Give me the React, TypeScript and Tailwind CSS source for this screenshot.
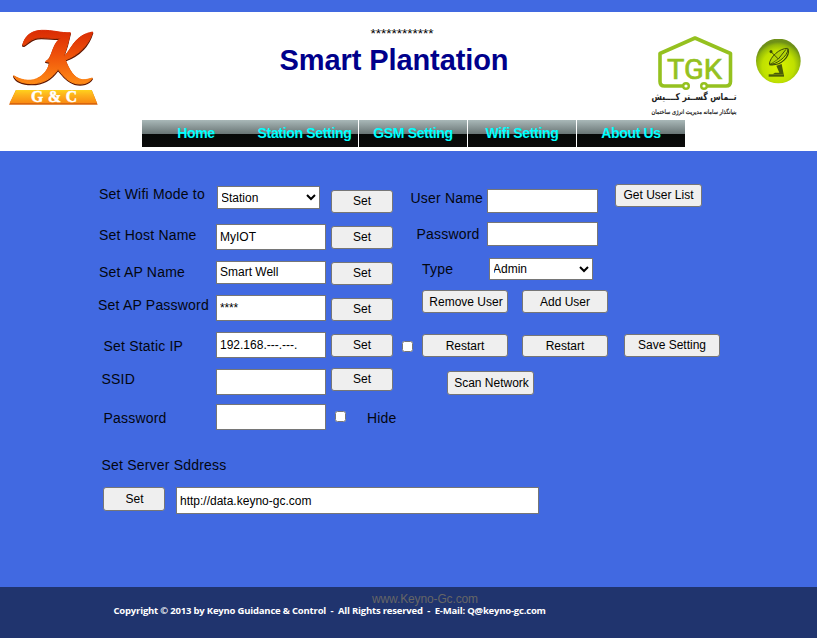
import { ReactNode } from "react";

const NAV_ITEMS = ["Home", "Station Setting", "GSM Setting", "Wifi Setting", "About Us"];

function Label({ className = "", children }: { className?: string; children: ReactNode }) {
  return (
    <span className={`block h-5 shrink-0 whitespace-nowrap text-[14px] leading-5 tracking-[0.2px] text-[#03060f] ${className}`}>
      {children}
    </span>
  );
}

function Field({ className = "", value = "", label }: { className?: string; value?: string; label: string }) {
  return (
    <input
      aria-label={label}
      defaultValue={value}
      className={`block shrink-0 border border-[#767676] bg-white px-[3px] text-[12px] text-black ${className}`}
    />
  );
}

function Button({ className = "", children }: { className?: string; children: ReactNode }) {
  return (
    <button
      className={`flex shrink-0 items-center justify-center whitespace-nowrap rounded-[3px] border border-[#767676] bg-[#efefef] text-[12px] leading-none text-black ${className}`}
    >
      {children}
    </button>
  );
}

const K_SHAPE =
  "M68 136C75 108 94 93 125 92C160 91 184 101 211 99C206 125 199 148 190 172C216 150 222 106 278 97C268 132 240 164 196 181C206 208 222 236 246 240C260 241 268 237 277 235C268 251 246 256 224 251C197 243 184 220 174 209C156 236 130 252 95 252C65 251 47 243 41 228C60 240 88 247 110 237C132 227 146 207 149 188L137 185C149 180 151 170 157 155C163 138 168 125 182 115C150 119 126 110 106 116C90 120 84 131 72 137Z";

function KeynoLogo() {
  return (
    <svg className="ml-2 mt-4 h-[78px] w-[92px] shrink-0" viewBox="24 84 276 234">
      <defs>
        <linearGradient id="kFill" x1="0" y1="90" x2="0" y2="255" gradientUnits="userSpaceOnUse">
          <stop offset="0" stopColor="#d92a04" />
          <stop offset="0.45" stopColor="#ee500a" />
          <stop offset="1" stopColor="#ff8c16" />
        </linearGradient>
        <linearGradient id="plate" x1="0" y1="0" x2="0" y2="1">
          <stop offset="0" stopColor="#ffd21c" />
          <stop offset="0.35" stopColor="#fdb51c" />
          <stop offset="1" stopColor="#f98a12" />
        </linearGradient>
      </defs>
      <path d={K_SHAPE} transform="translate(0 2)" fill="#5f1804" stroke="#5f1804" strokeWidth="4" strokeLinejoin="round" />
      <path d={K_SHAPE} transform="translate(0 -1)" fill="url(#kFill)" stroke="url(#kFill)" strokeWidth="3" strokeLinejoin="round" />
      <path d="M48 270H275L293 314H27Z" fill="#d9660c" />
      <path d="M48 270H275L291 309H29Z" fill="url(#plate)" />
      <text
        x="162"
        y="306"
        textAnchor="middle"
        textLength="138"
        fill="#fff"
        stroke="#fff"
        strokeWidth="1.5"
        fontFamily="'Liberation Serif', serif"
        fontWeight="700"
        fontSize="47"
      >
        G &amp; C
      </text>
    </svg>
  );
}

function TgkLogo() {
  return (
    <svg className="mt-px h-[84px] w-[90px] shrink-0 overflow-visible" viewBox="0 0 90 84">
      <g transform="translate(-1.5 0)">
        <g fill="none" stroke="#95c11f" strokeWidth="3.6" strokeLinejoin="round" strokeLinecap="round">
          <path d="M33 51H14Q9.5 51 9.5 46.5V18.5L44.5 3L80 18.5V46.5Q80 51 75.5 51H57" />
          <circle cx="35.5" cy="51" r="2.8" fill="#fff" strokeWidth="2.4" />
          <circle cx="53.5" cy="51" r="2.8" fill="#fff" strokeWidth="2.4" />
        </g>
        <text
          x="16.5"
          y="43.6"
          textLength="55"
          lengthAdjust="spacingAndGlyphs"
          fill="#95c11f"
          stroke="#95c11f"
          strokeWidth="0.7"
          fontFamily="Roboto, sans-serif"
          fontWeight="400"
          fontSize="28"
        >
          TGK
        </text>
      </g>
      <text
        x="42"
        y="65"
        direction="rtl"
        textAnchor="middle"
        textLength="85"
        lengthAdjust="spacingAndGlyphs"
        fill="#222"
        fontFamily="'DejaVu Sans', sans-serif"
        fontWeight="700"
        fontSize="9.5"
      >
        تــماس گســتر کــــیش
      </text>
      <text
        x="42"
        y="79"
        direction="rtl"
        textAnchor="middle"
        textLength="85"
        lengthAdjust="spacingAndGlyphs"
        fill="#111"
        stroke="#111"
        strokeWidth="0.2"
        fontFamily="'DejaVu Sans', sans-serif"
        fontSize="6.2"
      >
        بنیانگذار سامانه مدیریت انرژی ساختمان
      </text>
    </svg>
  );
}

function DishIcon() {
  return (
    <svg className="ml-[14px] mt-[5px] h-[46px] w-[46px] shrink-0" viewBox="0 0 138 138">
      <defs>
        <radialGradient id="ball" cx="0.5" cy="0.62" r="0.55">
          <stop offset="0" stopColor="#dcf400" />
          <stop offset="0.65" stopColor="#bfe000" />
          <stop offset="0.88" stopColor="#93b80a" />
          <stop offset="1" stopColor="#6f9018" />
        </radialGradient>
      </defs>
      <circle cx="67" cy="66" r="67" fill="url(#ball)" />
      <g stroke="#3c4c08" fill="none">
        <path d="M94 28C70 28 42 54 40 75C58 80 96 52 96 30Z" fill="#b4d408" strokeWidth="3" />
        <path d="M96 29C103 52 76 82 40 77" strokeWidth="3.5" />
        <path d="M45 38L67 60L90 31" strokeWidth="3" />
        <path d="M67 60L44 75" strokeWidth="2" />
        <circle cx="45" cy="38" r="4" fill="#3c4c08" />
      </g>
      <path d="M61 80L77 75L83 106H50L57 101H70Z" fill="#4a5c08" />
      <path d="M38 106H84V113H38Z" fill="#4a5c08" />
    </svg>
  );
}

function Header() {
  return (
    <header className="flex h-[139px] flex-col bg-white">
      <div className="flex h-[108px] items-start">
        <KeynoLogo />
        <div className="ml-[144px] flex w-[300px] flex-col items-center text-center">
          <span className="mt-[13px] h-[17px] pl-4 text-[13.5px] leading-[17px] text-black">************</span>
          <h1 className="mt-px h-[34px] whitespace-nowrap text-[29px] font-bold leading-[34px] tracking-[-0.1px] text-[#00008b]">
            Smart Plantation
          </h1>
        </div>
        <div className="ml-auto flex pr-[15px] pt-[22px]">
          <TgkLogo />
          <DishIcon />
        </div>
      </div>
      <nav className="ml-[142px] flex h-[27px] w-[543px] bg-white">
        {NAV_ITEMS.map((item, i) => (
          <a
            key={item}
            className={`flex h-[27px] w-[108px] items-center justify-center whitespace-nowrap bg-[linear-gradient(to_bottom,#a9b8b8_0px,#697575_14px,#060807_14px,#0b0b0b_27px)] pb-px text-[14px] font-bold leading-[16px] tracking-[-0.33px] text-[#00ffff] ${
              i > 1 ? "ml-px" : i === 1 ? "pl-px" : ""
            }`}
          >
            {item}
          </a>
        ))}
      </nav>
    </header>
  );
}

function StationForm() {
  return (
    <>
      <div className="ml-[98px] flex w-[118px] flex-col">
        <Label className="ml-px mt-[33px]">Set Wifi Mode to</Label>
        <Label className="ml-px mt-[21px]">Set Host Name</Label>
        <Label className="ml-px mt-[17px]">Set AP Name</Label>
        <Label className="mt-[13px]">Set AP Password</Label>
        <Label className="ml-[5.5px] mt-[21px]">Set Static IP</Label>
        <Label className="ml-[3.5px] mt-[13px]">SSID</Label>
        <Label className="ml-[5.5px] mt-[19px]">Password</Label>
      </div>
      <div className="flex w-[115px] flex-col">
        <select
          aria-label="Wifi mode"
          className="ml-px mt-[35px] h-[23px] w-[103px] shrink-0 border border-[#767676] bg-white text-[12px] text-black -indent-px"
        >
          <option>Station</option>
        </select>
        <Field label="Host name" value="MyIOT" className="mt-[15px] h-[26px] w-[110px]" />
        <Field label="AP name" value="Smart Well" className="mt-[11px] h-[23px] w-[110px] pb-[2px]" />
        <Field label="AP password" value="****" className="mt-[11px] h-[26px] w-[110px] tracking-[-0.2px]" />
        <Field label="Static IP" value="192.168.---.---." className="mt-[11px] h-[26px] w-[110px]" />
        <Field label="SSID" className="mt-[11px] h-[26px] w-[110px]" />
        <Field label="Network password" className="mt-[9px] h-[26px] w-[110px]" />
      </div>
      <div className="flex w-[71px] flex-col">
        <Button className="mt-[39px] h-[23px] w-[62px] pb-[2px]">Set</Button>
        <Button className="mt-[13px] h-[23px] w-[62px] pb-[2px]">Set</Button>
        <Button className="mt-[13px] h-[23px] w-[62px] pb-[2px]">Set</Button>
        <Button className="mt-[13px] h-[23px] w-[62px] pb-[2px]">Set</Button>
        <Button className="mt-[13px] h-[23px] w-[62px] pb-[2px]">Set</Button>
        <Button className="mt-[11px] h-[23px] w-[62px] pb-[2px]">Set</Button>
        <div className="mt-[17px] flex">
          <input type="checkbox" aria-label="Hide" className="ml-1 mt-[3px] h-[11px] w-[11px] shrink-0" />
          <Label className="ml-[21px]">Hide</Label>
        </div>
      </div>
    </>
  );
}

function UserForm() {
  return (
    <div className="flex flex-col">
      <div className="flex h-[139px]">
        <div className="ml-[8px] flex w-[77px] flex-col">
          <Label className="ml-[0.5px] mt-[37px]">User Name</Label>
          <Label className="ml-[6.5px] mt-4">Password</Label>
          <Label className="ml-[12px] mt-[15px]">Type</Label>
        </div>
        <div className="flex w-[128px] flex-col">
          <Field label="User name" className="mt-[38px] h-6 w-[111px]" />
          <Field label="User password" className="mt-[9px] h-6 w-[111px]" />
          <select
            aria-label="User type"
            className="ml-[2px] mt-3 h-[22px] w-[104px] shrink-0 border border-[#767676] bg-white text-[12px] text-black -indent-px"
          >
            <option>Admin</option>
          </select>
        </div>
        <Button className="mt-[33px] h-[23px] w-[87px] pb-[2px]">Get User List</Button>
      </div>
      <div className="ml-5 flex gap-[14px]">
        <Button className="h-[23px] w-[86px] pl-[2px]">Remove User</Button>
        <Button className="h-[23px] w-[86px]">Add User</Button>
      </div>
      <div className="mt-[21px] flex">
        <input type="checkbox" aria-label="Use static IP" className="mt-[7px] h-[11px] w-[11px] shrink-0" />
        <Button className="ml-[9px] h-[23px] w-[86px]">Restart</Button>
        <Button className="ml-[14px] mt-px h-[22px] w-[86px]">Restart</Button>
        <Button className="ml-4 h-[23px] w-24 pb-px">Save Setting</Button>
      </div>
      <Button className="ml-[45px] mt-[14px] h-6 w-[87px] pl-[2px]">Scan Network</Button>
    </div>
  );
}

export default function App() {
  return (
    <div className="h-[639px] w-[817px] overflow-hidden bg-[#4169e1] pt-3 font-['Liberation_Sans',Arial,sans-serif]">
      <Header />
      <main className="h-[436px]">
        <div className="flex h-[304px]">
          <StationForm />
          <UserForm />
        </div>
        <Label className="ml-[101.5px]">Set Server Sddress</Label>
        <div className="ml-[103px] mt-3 flex items-start gap-[11px]">
          <Button className="h-6 w-[62px] pl-px">Set</Button>
          <Field label="Server address" value="http://data.keyno-gc.com" className="h-[27px] w-[363px]" />
        </div>
      </main>
      <footer className="flex h-[52px] flex-col border-b border-white bg-[#20346e]">
        <span className="ml-[372px] mt-[5px] h-[13px] text-[12px] leading-[14px] tracking-[-0.13px] text-[#666666]">
          www.Keyno-Gc.com
        </span>
        <span className="ml-[113.5px] whitespace-pre font-['Open_Sans',sans-serif] text-[9.5px] font-bold leading-[12px] tracking-[-0.195px] text-white">
          {"Copyright © 2013 by Keyno Guidance & Control  -  All Rights reserved  -  E-Mail: Q@keyno-gc.com"}
        </span>
      </footer>
    </div>
  );
}
